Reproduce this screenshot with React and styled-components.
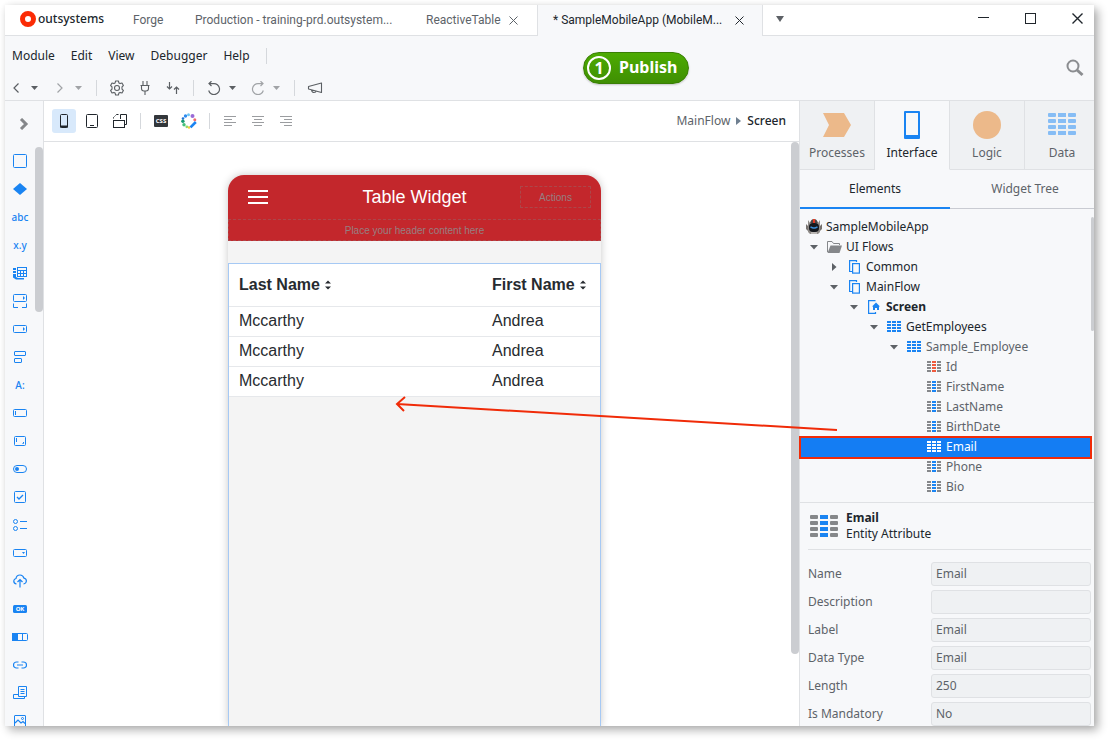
import React from "react";
import styled, { createGlobalStyle, css } from "styled-components";

const color = {
  text: "#20262c",
  muted: "#5d6369",
  chrome: "#f7f8fa",
  tab: "#eff1f3",
  line: "#dfe1e4",
  blue: "#1a84f2",
  thumb: "#cbcdd1",
  red: "#c3272c",
  note: "#f02b08",
};

const GlobalStyle = createGlobalStyle`
  * { box-sizing: border-box; }
  body {
    margin: 0;
    background: #fff;
    color: ${color.text};
    font: 12px/16px "Noto Sans", sans-serif;
  }
  button {
    margin: 0;
    padding: 0;
    border: 0;
    background: none;
    color: inherit;
    font: inherit;
  }
  svg { display: block; flex: none; }
`;

const Page = styled.div`
  height: 100vh;
  padding: 5px 15px 15px 5px;
`;

const Window = styled.div`
  position: relative;
  display: flex;
  flex-direction: column;
  height: 100%;
  background: ${color.chrome};
  box-shadow: 4px 4px 9px rgba(0, 0, 0, 0.32), 0 0 5px rgba(0, 0, 0, 0.05);
`;

/* ---------- Title bar ---------- */

const TitleBar = styled.header`
  display: flex;
  flex: none;
  height: 31px;
  background: #fff;
`;

const Brand = styled.div`
  display: flex;
  align-items: center;
  gap: 2px;
  width: 112px;
  padding: 0 0 2px 15px;
  border-bottom: 1px solid ${color.line};
  font-weight: 500;
`;

const DocTab = styled.div`
  display: flex;
  flex: none;
  align-items: center;
  justify-content: space-between;
  width: ${(p) => p.$width}px;
  padding: 0 16px;
  white-space: nowrap;
  font-family: Roboto, "Noto Sans", sans-serif;
  color: ${(p) => (p.$active ? color.text : color.muted)};
  border-bottom: 1px solid ${color.line};
  ${(p) =>
    p.$active &&
    css`
      padding: 0 15px;
      background: ${color.chrome};
      border: solid ${color.line};
      border-width: 0 1px;
      padding-bottom: 1px;
    `}
`;

const TabClose = styled.button`
  display: flex;
  justify-content: center;
  width: 16px;
`;

const WindowControls = styled.div`
  display: flex;
  flex: 1;
  align-items: center;
  gap: 24px;
  padding: 0 5px 3px 5px;
  border-bottom: 1px solid ${color.line};
`;

const WindowButton = styled.button`
  display: flex;
  justify-content: center;
  width: 23px;
  ${(p) => p.$push && "margin-right: auto;"}
`;

/* ---------- Menu and main toolbar ---------- */

const Header = styled.div`
  display: flex;
  flex: none;
  align-items: center;
  height: 65px;
  border-bottom: 1px solid ${color.line};
`;

const HeaderLeft = styled.div`
  flex: 1;
  align-self: stretch;
`;

const MenuBar = styled.nav`
  display: flex;
  align-items: center;
  gap: 16px;
  height: 39px;
  padding-left: 7px;
`;

const Separator = styled.span`
  width: 1px;
  height: 16px;
  margin: 0 ${(p) => p.$space || 0}px;
  background: #d5d8dc;
`;

const ToolBar = styled.div`
  display: flex;
  align-items: center;
  gap: 8px;
  height: 26px;
  padding-left: 1px;
  color: #5b5f63;
`;

const Split = styled.span`
  display: flex;
  opacity: ${(p) => (p.$off ? 0.55 : 1)};
`;

const ToolButton = styled.button`
  display: flex;
  align-items: center;
  justify-content: center;
  width: ${(p) => (p.$caret ? 16 : 20)}px;
  height: 20px;
`;

const Publish = styled.button`
  display: flex;
  align-items: center;
  gap: 8px;
  width: 106px;
  height: 32px;
  padding: 0 3px;
  border: 1px solid #3a7f05;
  border-radius: 16px;
  background: linear-gradient(#4dab02, #3f8f03);
  box-shadow: 0 1px 2px rgba(0, 0, 0, 0.2);
  color: #fff;
  font-size: 16px;
  font-weight: 700;
`;

const PublishLabel = styled.span`
  padding-bottom: 2px;
`;

const PublishCount = styled.span`
  display: grid;
  place-items: center;
  width: 24px;
  height: 24px;
  border: 2px solid #fff;
  border-radius: 50%;
`;

const HeaderRight = styled.div`
  display: flex;
  justify-content: flex-end;
  width: 405px;
  padding-right: 10px;
`;

/* ---------- Body ---------- */

const Body = styled.div`
  display: flex;
  flex: 1;
  min-height: 0;
  overflow: hidden;
`;

const Rail = styled.aside`
  display: flex;
  flex: none;
  flex-direction: column;
  width: 39px;
  border-right: 1px solid ${color.line};
`;

const RailToggle = styled.button`
  display: flex;
  flex: none;
  align-items: center;
  justify-content: center;
  height: 46px;
`;

const RailScroll = styled.div`
  display: flex;
  min-height: 0;
`;

const RailList = styled.div`
  flex: 1;
  overflow: hidden;
`;

const RailButton = styled.button`
  display: flex;
  align-items: center;
  justify-content: center;
  width: 30px;
  height: 28px;
  color: ${color.blue};
`;

const Thumb = styled.div`
  flex: none;
  width: ${(p) => p.$width || 8}px;
  height: ${(p) => p.$height}px;
  border-radius: 4px;
  background: ${color.thumb};
`;

const Editor = styled.main`
  display: flex;
  flex: 1;
  flex-direction: column;
  min-width: 0;
  background: #fff;
`;

const EditorBar = styled.div`
  display: flex;
  flex: none;
  align-items: center;
  gap: 4px;
  height: 41px;
  padding: 0 13px 0 8px;
  border-bottom: 1px solid ${color.line};
`;

const EditorButton = styled.button`
  display: flex;
  align-items: center;
  justify-content: center;
  width: 24px;
  height: 24px;
  border-radius: 3px;
  background: ${(p) => (p.$active ? "#d8e9fb" : "none")};
`;

const Crumbs = styled.div`
  display: flex;
  align-items: center;
  gap: 6px;
  margin-left: auto;
  color: ${color.muted};
`;

const CrumbCurrent = styled.span`
  color: ${color.text};
  font-weight: 500;
`;

const Stage = styled.div`
  display: flex;
  flex: 1;
  min-height: 0;
  overflow: hidden;
`;

const StageArea = styled.div`
  display: flex;
  flex: 1;
  justify-content: center;
  padding: 33px 6px 0 0;
`;

/* ---------- Device preview ---------- */

const Device = styled.section`
  display: flex;
  flex-direction: column;
  width: 373px;
  border-radius: 16px 16px 0 0;
  background: #f4f4f4;
  box-shadow: 0 0 9px rgba(0, 0, 0, 0.22);
  font-family: "Liberation Sans", Arial, sans-serif;
`;

const DeviceHeader = styled.div`
  border-radius: 16px 16px 0 0;
  background: ${color.red};
  color: #fff;
`;

const DeviceTitleRow = styled.div`
  display: grid;
  grid-template-columns: 71px 1fr 71px;
  align-items: center;
  height: 44px;
  padding: 0 10px;
`;

const DeviceTitle = styled.h1`
  margin: 0;
  font-size: 18px;
  font-weight: 400;
  line-height: 22px;
  text-align: center;
`;

const Burger = styled.button`
  display: flex;
  padding-left: 10px;
`;

const Placeholder = styled.div`
  height: 22px;
  border: 1px dashed rgba(140, 120, 120, 0.4);
  color: #967f81;
  font-size: 10px;
  line-height: 22px;
  text-align: center;
`;

const DeviceContent = styled.div`
  flex: 1;
  margin-top: 22px;
  border: solid #a6c9f4;
  border-width: 1px 1px 0;
`;

const DataTable = styled.table`
  width: 100%;
  border-collapse: collapse;
  table-layout: fixed;
  background: #fff;
  color: #272b30;
  font-size: 16px;
  line-height: 20px;
  text-align: left;
`;

const HeadCell = styled.th`
  width: ${(p) => p.$width};
  height: 42px;
  padding: 0 10px;
  border-bottom: 1px solid #e6e8eb;
`;

const HeadLabel = styled.span`
  display: flex;
  align-items: center;
  gap: 5px;
`;

const Cell = styled.td`
  height: 30px;
  padding: 0 10px;
  border-bottom: 1px solid #e6e8eb;
`;

/* ---------- Right panel ---------- */

const Panel = styled.aside`
  flex: none;
  width: 295px;
  border-left: 1px solid ${color.line};
`;

const LayerTabs = styled.div`
  display: flex;
  overflow: hidden;
`;

const LayerTab = styled.button`
  display: flex;
  flex: 0 0 75px;
  flex-direction: column;
  align-items: center;
  gap: 6px;
  height: 69px;
  padding-top: 10px;
  border: solid ${color.line};
  border-width: 0 1px 1px 0;
  background: ${(p) => (p.$active ? color.chrome : color.tab)};
  border-bottom-color: ${(p) => (p.$active ? color.chrome : color.line)};
  color: ${(p) => (p.$active ? color.text : color.muted)};
`;

const SubTabs = styled.div`
  display: flex;
  overflow: hidden;
`;

const SubTab = styled.button`
  flex: 0 0 150px;
  height: 39px;
  border-bottom: ${(p) => (p.$active ? `2px solid ${color.blue}` : "1px solid #c9cbd2")};
  color: ${(p) => (p.$active ? color.text : color.muted)};
`;

const TreeArea = styled.div`
  display: flex;
  align-items: flex-start;
  padding-top: 8px;
  border-bottom: 1px solid ${color.line};
`;

const Tree = styled.ul`
  flex: 1;
  margin: 0 0 5px;
  padding: 0;
  list-style: none;
`;

const TreeRow = styled.li`
  position: relative;
  display: flex;
  align-items: center;
  gap: 4px;
  height: 20px;
  padding-left: ${(p) => 6 + 20 * Math.max(0, p.$level - 1)}px;
  color: ${(p) => (p.$level > 4 ? color.muted : color.text)};
  font-weight: ${(p) => (p.$bold ? 700 : 400)};
  ${(p) =>
    p.$selected &&
    css`
      z-index: 0;
      color: #fff;
      &::before {
        content: "";
        position: absolute;
        z-index: -1;
        inset: -1px -1px -2px;
        border: 2px solid ${color.note};
        background: #147df3;
      }
    `}
`;

const IconSlot = styled.span`
  display: flex;
  align-items: center;
  justify-content: center;
  width: 16px;
  height: 16px;
`;

const Summary = styled.div`
  display: flex;
  align-items: center;
  gap: 8px;
  margin: 0 3px 0 8px;
  padding: 7px 0 7px 2px;
  border-bottom: 1px solid ${color.line};
`;

const Strong = styled.strong`
  display: block;
  font-weight: 700;
`;

const Properties = styled.form`
  display: grid;
  gap: 4px;
  padding: 12px 3px 0 8px;
`;

const Property = styled.label`
  display: grid;
  grid-template-columns: 123px 1fr;
  align-items: center;
  height: 24px;
  color: ${color.muted};
`;

const Field = styled.input`
  width: 100%;
  min-width: 0;
  height: 24px;
  padding: 0 4px 1px;
  border: 1px solid #dfe1e4;
  border-radius: 3px;
  background: ${color.tab};
  color: ${color.muted};
  font: inherit;
`;

const Pointer = styled.svg`
  position: absolute;
  top: 391px;
  right: 256px;
  pointer-events: none;
`;

/* ---------- Icons ---------- */

const Svg = ({ w = 16, h = w, children, sw = 1 }) => (
  <svg width={w} height={h} viewBox={`0 0 ${w} ${h}`} fill="none" stroke="currentColor" strokeWidth={sw} aria-hidden="true">
    {children}
  </svg>
);

const Caret = () => (
  <Svg w={7} h={4}><path d="M0 0H7L3.5 4Z" fill="currentColor" stroke="none" /></Svg>
);

const Cross = ({ size = 10 }) => (
  <Svg w={size} sw={size > 10 ? 1.4 : 1}><path d={`M.5 .5L${size - 0.5} ${size - 0.5}M${size - 0.5} .5L.5 ${size - 0.5}`} /></Svg>
);

const GridIcon = ({ side = color.blue, mid = side, big }) => {
  const w = big ? 28 : 14;
  const h = big ? 22 : 12;
  const cw = big ? 8 : 4;
  const rh = big ? 4 : 2;
  return (
    <svg width={w} height={h} viewBox={`0 0 ${w} ${h}`} aria-hidden="true">
      {[0, 1, 2, 3].map((r) =>
        [0, 1, 2].map((c) => (
          <rect key={`${r}${c}`} x={c * (cw + (big ? 2 : 1))} y={r * (big ? 6 : 3)} width={cw} height={rh} rx={big && c !== 1 ? 1 : 0} fill={c === 1 ? mid : side} />
        ))
      )}
    </svg>
  );
};

const Gear = () => (
  <Svg w={16} sw={1.1}>
    <path d="M6.6 1h2.8l.5 1.9 1.2.7 1.9-.6 1.4 2.5-1.4 1.3v2.4l1.4 1.3-1.4 2.5-1.9-.6-1.2.7-.5 1.9H6.6l-.5-1.9-1.2-.7-1.9.6-1.4-2.5L3 9.2V6.8L1.6 5.5 3 3l1.9.6 1.2-.7Z" strokeLinejoin="round" />
    <circle cx="8" cy="8" r="2.5" />
  </Svg>
);

const Plug = () => (
  <Svg w={10} h={14} sw={1.1}>
    <path d="M3 0V4M7 0V4M.5 4.5H9.5M1.5 4.5V7.5Q1.5 10 4 10H6Q8.5 10 8.5 7.5V4.5M5 10V14" />
  </Svg>
);

const Transfer = () => (
  <Svg w={14} h={14} sw={1.2}>
    <path d="M3.5 1V8M1 5.5L3.5 8L6 5.5M10.5 13V6M8 8.5L10.5 6L13 8.5" />
  </Svg>
);

const Undo = ({ flip }) => (
  <Svg w={14} sw={1.2}>
    <g transform={flip ? "matrix(-1 0 0 1 14 0)" : undefined}>
      <path d="M1.7 9.5A5.5 5.5 0 1 0 6.500 2.600H2M4.500 .2L2 2.600L4.500 5" />
    </g>
  </Svg>
);

const Megaphone = () => (
  <Svg w={16} h={14} sw={1.1}>
    <path d="M14.5 2V11.5L1.500 8V5.500ZM4.500 8.800Q5 11.500 7 11.500Q9 11.500 9 10" strokeLinejoin="round" />
  </Svg>
);

const Search = () => (
  <Svg w={18} sw={2}>
    <circle cx="7" cy="7" r="5.5" stroke="#8b8d90" />
    <path d="M11 11L16.5 16" stroke="#8b8d90" strokeWidth="3" />
  </Svg>
);

const PhoneIcon = () => (
  <Svg w={8} h={14}><rect x=".5" y=".5" width="7" height="13" rx="1" /><path d="M0 12.5H8" strokeWidth="2" /></Svg>
);
const TabletIcon = () => (
  <Svg w={12} h={14}><rect x=".5" y=".5" width="11" height="13" rx="1" /><path d="M4 11.5H8" /></Svg>
);
const ScreensIcon = () => (
  <Svg w={14} h={14}>
    <rect x=".5" y="6.5" width="11" height="7" />
    <path d="M7.5 5V.5H13.5V10.5H12M.5 4.5V3.500L1.500 2.500M2.500 1.500L3.500 .5H5.500" />
  </Svg>
);

const CssIcon = () => (
  <svg width="14" height="12" viewBox="0 0 14 12" aria-hidden="true">
    <rect width="14" height="12" rx="1" fill="#33373b" />
    <text x="7" y="8" fill="#fff" fontFamily="Noto Sans, sans-serif" fontSize="6" fontWeight="700" textAnchor="middle">CSS</text>
  </svg>
);

const ThemeWheel = () => (
  <svg width="16" height="16" viewBox="0 0 16 16" aria-hidden="true">
    <circle cx="4.5" cy="3" r="1.700" fill="#2d8cf0" />
    <circle cx="7.500" cy="1.700" r="1.500" fill="#6fc6f5" />
    <circle cx="11.500" cy="3" r="2" fill="#9a6bd6" />
    <circle cx="2" cy="5.500" r="1.300" fill="#1f6fd6" />
    <circle cx="13.800" cy="6.800" r="1.500" fill="#f26a6a" />
    <circle cx="1.900" cy="8.200" r="1.700" fill="#159a72" />
    <circle cx="3" cy="11.800" r="1.700" fill="#43c07a" />
    <circle cx="5.800" cy="13.800" r="1.400" fill="#8fdc6b" />
    <circle cx="8" cy="14.500" r="1.300" fill="#f6cf3c" />
    <path d="M14.800 9L9.500 14.300" stroke="#1a84f2" strokeWidth="2.600" />
  </svg>
);

const AlignIcon = ({ align }) => (
  <Svg w={12} h={11}>
    {[12, 8, 12, 8].map((len, i) => {
      const x = align === "left" ? 0 : align === "right" ? 12 - len : (12 - len) / 2;
      return <path key={i} d={`M${x} ${i * 3 + 0.5}h${len}`} stroke="#9b9da0" />;
    })}
  </Svg>
);

const BlueText = ({ children, size = 10, w = 18 }) => (
  <svg width={w} height="14" viewBox={`0 0 ${w} 14`} aria-hidden="true">
    <text x={w / 2} y="11" fill="currentColor" fontFamily="Noto Sans, sans-serif" fontSize={size} fontWeight="500" textAnchor="middle">{children}</text>
  </svg>
);

const solid = { fill: "currentColor", stroke: "none" };

const widgets = [
  ["Container", <Svg w={14}><rect x=".5" y=".5" width="13" height="13" rx="1" /></Svg>],
  ["If", <Svg w={14} h={12}><path d="M7 0L14 6L7 12L0 6Z" {...solid} /></Svg>],
  ["Text", <BlueText>abc</BlueText>],
  ["Expression", <BlueText>x.y</BlueText>],
  ["Table", <Svg w={16} h={14}><rect x="5.5" y="1.5" width="9" height="9" /><path d="M5.5 4.5H14.5M5.5 7.5H14.5M8.5 4.5V10.5M11.5 4.5V10.5" /><path d="M1 2H4V11L6 12H12V13.5H4L1 11.5Z" {...solid} /><path d="M0 4.5H4M0 7.5H4" stroke={color.chrome} /></Svg>],
  ["List", <Svg w={14} h={14}><rect x=".5" y=".5" width="13" height="7" rx="1" /><path d="M.5 9.5V13.5H5M9 13.5H13.5V9.5" /><path d="M10 2L12 4L10 6Z" {...solid} /></Svg>],
  ["List item", <Svg w={14} h={8}><rect x=".5" y=".5" width="13" height="7" rx="1" /><path d="M10 2L12 4L10 6Z" {...solid} /></Svg>],
  ["Form", <Svg w={12} h={12}><rect x=".5" y=".5" width="11" height="4" rx=".5" /><rect x=".5" y="7.5" width="7" height="4" rx=".5" /></Svg>],
  ["Label", <BlueText>A:</BlueText>],
  ["Input", <Svg w={14} h={8}><rect x=".5" y=".5" width="13" height="7" rx="1" /><path d="M2.5 2V6" /></Svg>],
  ["Text area", <Svg w={12} h={10}><rect x=".5" y=".5" width="11" height="9" rx="1" /><path d="M2.5 2V6M9.5 6V7.5H8.500" /></Svg>],
  ["Switch", <Svg w={14} h={8}><rect x=".5" y=".5" width="13" height="7" rx="3.5" /><circle cx="4" cy="4" r="2" {...solid} /></Svg>],
  ["Checkbox", <Svg w={12} h={12}><rect x=".5" y=".5" width="11" height="11" rx="1" /><path d="M3 6L5 8L9 4" strokeWidth="1.3" /></Svg>],
  ["Radio group", <Svg w={14} h={12}><circle cx="2.5" cy="2.5" r="2" /><circle cx="2.5" cy="9.5" r="2" /><path d="M7 2.5H14M7 9.5H14" /></Svg>],
  ["Dropdown", <Svg w={14} h={8}><rect x=".5" y=".5" width="13" height="7" rx="1" /><path d="M9 3H12L10.5 5Z" {...solid} /></Svg>],
  ["Upload", <Svg w={14} h={14} sw={1.2}><path d="M3.500 10Q.6 9.500 .8 6.800Q1 5 3 4.500Q3.5 1 7 1Q10 1 11 4.200Q13.4 4.700 13.4 7Q13.200 9.500 10.500 10M7 13.500V5.5M4.5 8L7 5.5L9.5 8" /></Svg>],
  ["Button", <svg width="14" height="8" viewBox="0 0 14 8" aria-hidden="true"><rect width="14" height="8" rx="1.5" fill="currentColor" /><text x="7" y="6" fill="#fff" fontFamily="Noto Sans, sans-serif" fontSize="6" fontWeight="700" textAnchor="middle">OK</text></svg>],
  ["Button group", <Svg w={16} h={8}><rect x=".5" y=".5" width="15" height="7" rx="1" /><rect width="6" height="8" {...solid} /><path d="M10.5 0V8" /></Svg>],
  ["Link", <Svg w={14} h={8} sw={1.2}><path d="M5.5 1H3.5A3 3 0 0 0 3.5 7H5.5M8.5 1H10.5A3 3 0 0 1 10.5 7H8.5M4 4H10" /></Svg>],
  ["Popup", <Svg w={14} h={14}><path d="M5.5 .5H13.5V10.5H5.5ZM7.5 3.5H11.5M7.5 5.5H11.5M7.5 7.5H11.5M5.5 8.5H.5V12.5H11.5V10.5" /></Svg>],
  ["Image", <Svg w={12} h={12}><rect x=".5" y=".5" width="11" height="11" rx=".5" /><circle cx="8.5" cy="3.5" r="1" /><path d="M1 8L4 5L7 8L9 6.5L11 8.5" strokeWidth="1.2" /></Svg>],
];

const Robot = () => (
  <svg width="16" height="16" viewBox="0 0 16 16" aria-hidden="true">
    <path d="M2 1V13L4 15H12L14 13V1L12 4H4Z" fill="#8f8b88" />
    <path d="M0 5L2 7V12L0 10ZM16 5L14 7V12L16 10Z" fill="#77726f" />
    <path d="M4 4Q5 0 8 0Q11 0 12 4Z" fill="#4b4645" />
    <rect x="3" y="4" width="10" height="9" rx="4" fill="#15181d" />
    <path d="M7 0H9V4H7Z" fill="#e53a24" />
    <path d="M4.500 8L7 9H9L11.500 8" stroke="#3b8fd8" strokeWidth="1.4" fill="none" />
    <path d="M5 14H11" stroke="#e4e1de" />
  </svg>
);

const Folder = () => (
  <svg width="15" height="12" viewBox="0 0 15 12" aria-hidden="true">
    <path d="M.5 11V.5H5L6.5 2.5H12.5V4" fill="none" stroke="#85878a" />
    <path d="M3.5 4.5H15L12.5 12H.5Z" fill="#85878a" />
  </svg>
);

const FlowIcon = () => (
  <Svg w={11} h={14} sw={1.2}>
    <path d="M3 11.5H.6V.6H7.5V2" stroke={color.blue} />
    <rect x="3.6" y="3.6" width="6.8" height="9.5" stroke={color.blue} />
  </Svg>
);

const HomeScreenIcon = () => (
  <Svg w={12} h={14} sw={1.2}>
    <path d="M7.5 .6H.6V13.4H7.5V12" stroke={color.blue} />
    <path d="M8 2.5L12 6.5H11V10H9V8H7V10H5V6.5H4Z" fill={color.blue} stroke="none" />
  </Svg>
);

const attr = <GridIcon side="#85878a" mid={color.blue} />;

const tree = [
  { level: 0, label: "SampleMobileApp", icon: <Robot /> },
  { level: 1, label: "UI Flows", icon: <Folder />, open: true },
  { level: 2, label: "Common", icon: <FlowIcon />, open: false },
  { level: 2, label: "MainFlow", icon: <FlowIcon />, open: true },
  { level: 3, label: "Screen", icon: <HomeScreenIcon />, open: true, bold: true },
  { level: 4, label: "GetEmployees", icon: <GridIcon />, open: true },
  { level: 5, label: "Sample_Employee", icon: <GridIcon />, open: true },
  { level: 6, label: "Id", icon: <GridIcon side="#85878a" mid="#ef5a3c" /> },
  { level: 6, label: "FirstName", icon: attr },
  { level: 6, label: "LastName", icon: attr },
  { level: 6, label: "BirthDate", icon: attr },
  { level: 6, label: "Email", icon: <GridIcon side="#fff" />, selected: true },
  { level: 6, label: "Phone", icon: attr },
  { level: 6, label: "Bio", icon: attr },
];

const TreeArrow = ({ open }) => (
  <svg width="8" height="8" viewBox="0 0 8 8" fill="#5d6166" aria-hidden="true">
    {open === true && <path d="M0 2H8L4 6.5Z" />}
    {open === false && <path d="M2 0L6.5 4L2 8Z" />}
  </svg>
);

function LayerGrid() {
  return (
    <svg width="28" height="28" viewBox="0 0 28 28" aria-hidden="true">
      {[0, 1, 2, 3].map((r) =>
        [0, 1, 2].map((c) => (
          <rect key={`${r}${c}`} x={c * 10} y={2 + r * 6} width="8" height="4" rx={c === 1 ? 0 : 1} fill="#86bdf5" />
        ))
      )}
    </svg>
  );
}

const layers = [
  ["Processes", <Svg w={28}><path d="M0 2H21L28 14L21 26H0L6 14Z" fill="#ecb98a" stroke="none" /></Svg>],
  ["Interface", <Svg w={28}><path d="M7 1H21V25H7Z" stroke={color.blue} strokeWidth="2" strokeLinejoin="round" /><path d="M6 24H22V27Q22 28 21 28H7Q6 28 6 27Z" fill={color.blue} stroke="none" /></Svg>],
  ["Logic", <Svg w={28}><circle cx="14" cy="14" r="14" fill="#ecb98a" stroke="none" /></Svg>],
  ["Data", <LayerGrid />],
];

const SortIcon = () => (
  <svg width="6" height="10" viewBox="0 0 6 10" fill="#272b30" aria-hidden="true">
    <path d="M0 3.5L3 .5L6 3.5ZM0 6.5L3 9.5L6 6.5Z" />
  </svg>
);

const properties = [
  ["Name", "Email"],
  ["Description", ""],
  ["Label", "Email"],
  ["Data Type", "Email"],
  ["Length", "250"],
  ["Is Mandatory", "No"],
];

export default function App() {
  return (
    <Page>
      <GlobalStyle />
      <Window>
        <TitleBar>
          <Brand>
            <svg width="16" height="16" viewBox="0 0 16 16" aria-hidden="true">
              <circle cx="8" cy="8" r="5.5" fill="none" stroke="#fb2b05" strokeWidth="5" />
            </svg>
            outsystems
          </Brand>
          <DocTab $width={62}>Forge</DocTab>
          <DocTab $width={231}>Production - training-prd.outsystem...</DocTab>
          <DocTab $width={127}>
            ReactiveTable
            <TabClose aria-label="Close ReactiveTable"><Cross size={9} /></TabClose>
          </DocTab>
          <DocTab $width={226} $active>
            * SampleMobileApp (MobileM...
            <TabClose aria-label="Close SampleMobileApp"><Cross size={9} /></TabClose>
          </DocTab>
          <WindowControls>
            <WindowButton $push aria-label="All tabs">
              <Svg w={8} h={6}><path d="M0 0H8L4 6Z" fill="#5d6166" stroke="none" /></Svg>
            </WindowButton>
            <WindowButton aria-label="Minimize"><Svg w={11} h={3}><path d="M0 .5H11" /></Svg></WindowButton>
            <WindowButton aria-label="Maximize"><Svg w={11}><rect x=".5" y=".5" width="10" height="10" /></Svg></WindowButton>
            <WindowButton aria-label="Close"><Cross size={11} /></WindowButton>
          </WindowControls>
        </TitleBar>

        <Header>
          <HeaderLeft>
            <MenuBar>
              {["Module", "Edit", "View", "Debugger", "Help"].map((m) => <button key={m}>{m}</button>)}
              <Separator />
            </MenuBar>
            <ToolBar>
              <Split>
                <ToolButton aria-label="Back"><Svg w={6} h={10} sw={1.2}><path d="M5.5 .5L1 5L5.5 9.5" /></Svg></ToolButton>
                <ToolButton $caret aria-label="Back history"><Caret /></ToolButton>
              </Split>
              <Split $off>
                <ToolButton aria-label="Forward"><Svg w={6} h={10} sw={1.2}><path d="M.5 .5L5 5L.5 9.5" /></Svg></ToolButton>
                <ToolButton $caret aria-label="Forward history"><Caret /></ToolButton>
              </Split>
              <Separator $space={2} />
              <ToolButton aria-label="Settings"><Gear /></ToolButton>
              <ToolButton aria-label="Integrations"><Plug /></ToolButton>
              <ToolButton aria-label="Merge"><Transfer /></ToolButton>
              <Separator $space={2} />
              <Split>
                <ToolButton aria-label="Undo"><Undo /></ToolButton>
                <ToolButton $caret aria-label="Undo history"><Caret /></ToolButton>
              </Split>
              <Split $off>
                <ToolButton aria-label="Redo"><Undo flip /></ToolButton>
                <ToolButton $caret aria-label="Redo history"><Caret /></ToolButton>
              </Split>
              <Separator $space={2} />
              <ToolButton aria-label="Feedback"><Megaphone /></ToolButton>
            </ToolBar>
          </HeaderLeft>
          <Publish><PublishCount>1</PublishCount><PublishLabel>Publish</PublishLabel></Publish>
          <HeaderRight><button aria-label="Search"><Search /></button></HeaderRight>
        </Header>

        <Body>
          <Rail>
            <RailToggle aria-label="Expand toolbox">
              <Svg w={10} h={12} sw={3}><path d="M2 1L7 6L2 11" stroke="#85878a" /></Svg>
            </RailToggle>
            <RailScroll>
              <RailList>
                {widgets.map(([name, icon]) => <RailButton key={name} aria-label={name}>{icon}</RailButton>)}
              </RailList>
              <Thumb $height={165} />
            </RailScroll>
          </Rail>

          <Editor>
            <EditorBar>
              <EditorButton $active aria-label="Phone"><PhoneIcon /></EditorButton>
              <EditorButton aria-label="Tablet"><TabletIcon /></EditorButton>
              <EditorButton aria-label="Rotate"><ScreensIcon /></EditorButton>
              <Separator $space={4} />
              <EditorButton aria-label="Style sheet"><CssIcon /></EditorButton>
              <EditorButton aria-label="Theme"><ThemeWheel /></EditorButton>
              <Separator $space={4} />
              {["left", "center", "right"].map((a) => (
                <EditorButton key={a} aria-label={`Align ${a}`}><AlignIcon align={a} /></EditorButton>
              ))}
              <Crumbs>
                MainFlow
                <Svg w={5} h={8}><path d="M0 0L5 4L0 8Z" fill="#6f7f90" stroke="none" /></Svg>
                <CrumbCurrent>Screen</CrumbCurrent>
              </Crumbs>
            </EditorBar>
            <Stage>
              <StageArea>
                <Device>
                  <DeviceHeader>
                    <DeviceTitleRow>
                      <Burger aria-label="Menu">
                        <Svg w={20} h={14} sw={2}><path d="M0 1H20M0 7H20M0 13H20" /></Svg>
                      </Burger>
                      <DeviceTitle>Table Widget</DeviceTitle>
                      <Placeholder>Actions</Placeholder>
                    </DeviceTitleRow>
                    <Placeholder>Place your header content here</Placeholder>
                  </DeviceHeader>
                  <DeviceContent>
                    <DataTable>
                      <thead>
                        <tr>
                          <HeadCell $width="253px"><HeadLabel>Last Name <SortIcon /></HeadLabel></HeadCell>
                          <HeadCell><HeadLabel>First Name <SortIcon /></HeadLabel></HeadCell>
                        </tr>
                      </thead>
                      <tbody>
                        {[0, 1, 2].map((i) => (
                          <tr key={i}><Cell>Mccarthy</Cell><Cell>Andrea</Cell></tr>
                        ))}
                      </tbody>
                    </DataTable>
                  </DeviceContent>
                </Device>
              </StageArea>
              <Thumb $height={512} />
            </Stage>
          </Editor>

          <Panel>
            <LayerTabs>
              {layers.map(([name, icon]) => (
                <LayerTab key={name} $active={name === "Interface"}>{icon}{name}</LayerTab>
              ))}
            </LayerTabs>
            <SubTabs>
              <SubTab $active>Elements</SubTab>
              <SubTab>Widget Tree</SubTab>
            </SubTabs>
            <TreeArea>
              <Tree>
                {tree.map((n) => (
                  <TreeRow key={n.label} $level={n.level} $bold={n.bold} $selected={n.selected}>
                    {n.level > 0 && <IconSlot><TreeArrow open={n.open} /></IconSlot>}
                    <IconSlot>{n.icon}</IconSlot>
                    {n.label}
                  </TreeRow>
                ))}
              </Tree>
              <Thumb $width={3} $height={114} />
            </TreeArea>
            <Summary>
              <GridIcon big side="#85878a" mid={color.blue} />
              <div><Strong>Email</Strong>Entity Attribute</div>
            </Summary>
            <Properties>
              {properties.map(([name, value]) => (
                <Property key={name}>{name}<Field readOnly value={value} /></Property>
              ))}
            </Properties>
          </Panel>
        </Body>

        <Pointer width="444" height="36" viewBox="0 0 444 36" fill="none" stroke={color.note} strokeWidth="2" aria-hidden="true">
          <path d="M443 34L3 8M11 1L3 8L10 15" />
        </Pointer>
      </Window>
    </Page>
  );
}
